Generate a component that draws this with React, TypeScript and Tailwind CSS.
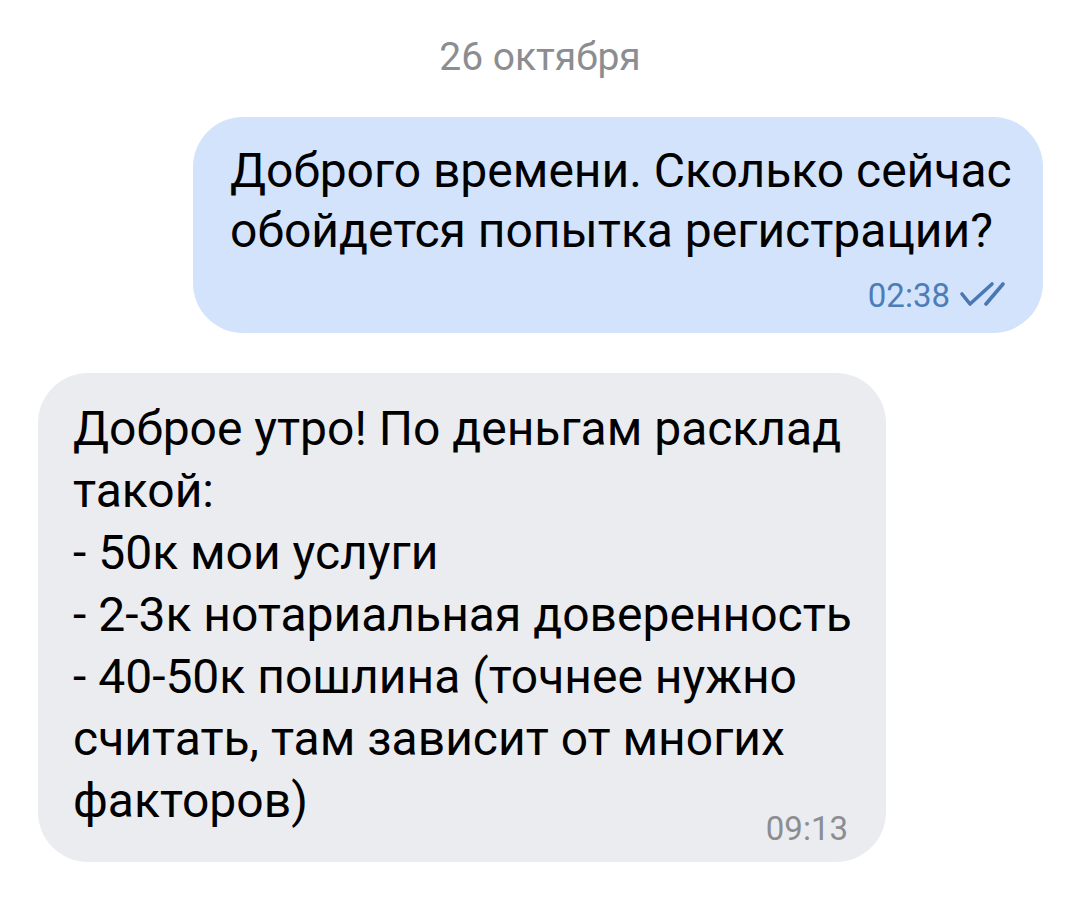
export default function App() {
  return (
    <div className="w-[1080px] h-[897px] bg-white overflow-hidden font-['Roboto',sans-serif]">
      {/* Date */}
      <div className="pt-[33px] text-center text-[39px] leading-[48px] text-[#8b8d91]">
        26 октября
      </div>

      {/* Outgoing */}
      <div className="mt-[36px] flex justify-end pr-[37px]">
        <div className="w-[850px] h-[216px] rounded-[50px] bg-[#d2e3fb] pl-[37px] pr-[38px] pt-[24px]">
          <p className="whitespace-nowrap text-[48px] leading-[60px] text-black">
            Доброго времени. Сколько сейчас
            <br />
            обойдется попытка регистрации?
          </p>
          <div className="mt-[15px] flex items-center justify-end gap-[9px]">
            <span className="text-[33px] leading-[40px] text-[#4d7db7]">02:38</span>
            <svg width="46" height="26" viewBox="0 0 46 26" fill="none" stroke="#4a78b3" strokeWidth="3.6" strokeLinecap="round" strokeLinejoin="round" className="-mt-[4px]">
              <path d="M3 13 L11 23 L33 3" />
              <path d="M27 23 L44 3" />
            </svg>
          </div>
        </div>
      </div>

      {/* Incoming */}
      <div className="mt-[40px] flex justify-start pl-[38px]">
        <div className="w-[848px] h-[489px] rounded-[50px] bg-[#ebecf0] pl-[35px] pr-[38px] pt-[25px]">
          <p className="whitespace-nowrap text-[48px] leading-[62px] text-black">
            Доброе утро! По деньгам расклад
            <br />
            такой:
            <br />
            - 50к мои услуги
            <br />
            - 2-3к нотариальная доверенность
            <br />
            - 40-50к пошлина (точнее нужно
            <br />
            считать, там зависит от многих
          </p>
          <div className="flex items-end justify-between">
            <span className="whitespace-nowrap text-[48px] leading-[62px] text-black">факторов)</span>
            <span className="text-[33px] leading-[40px] text-[#8b8d91] mb-[-17px]">09:13</span>
          </div>
        </div>
      </div>
    </div>
  );
}
